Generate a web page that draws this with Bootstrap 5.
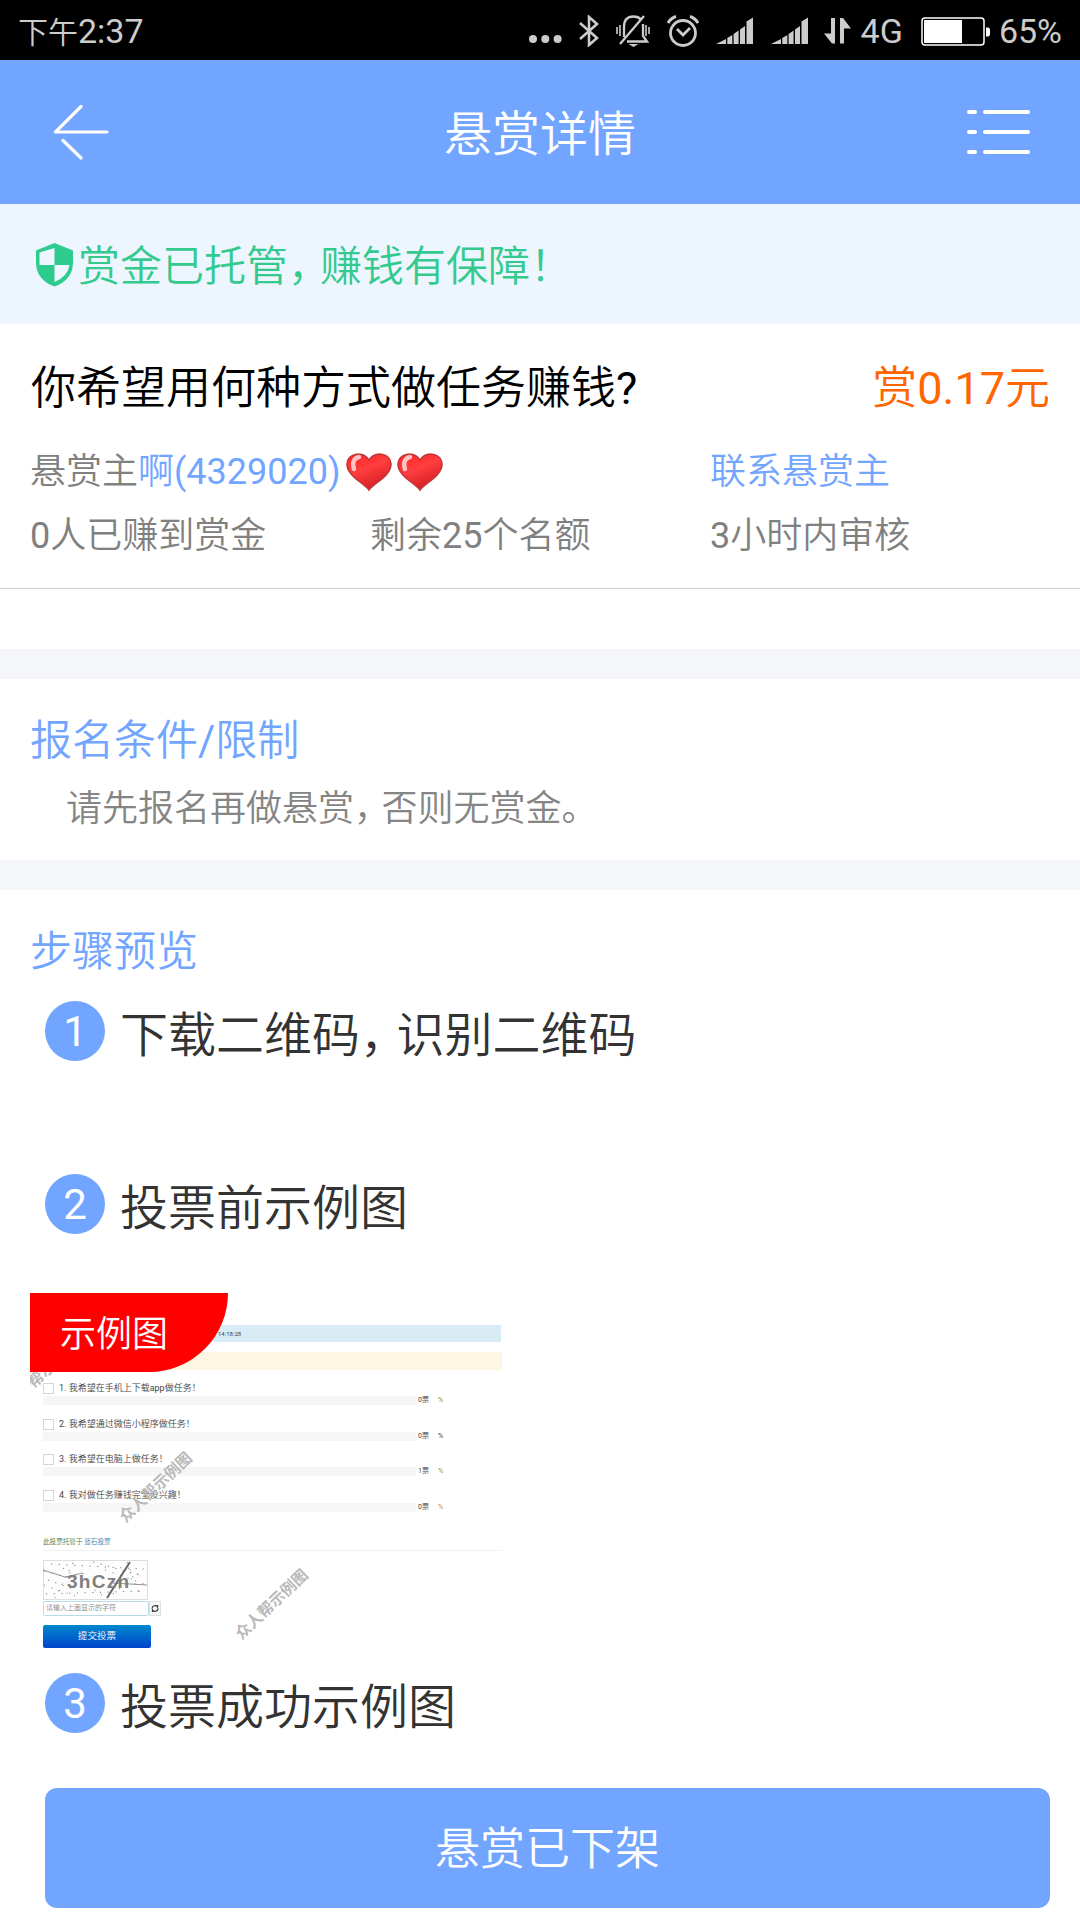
<!DOCTYPE html>
<html lang="zh-CN">
<head>
<meta charset="utf-8">
<meta name="viewport" content="width=device-width, initial-scale=1">
<title>悬赏详情</title>
<link rel="stylesheet" href="https://cdn.jsdelivr.net/npm/bootstrap@5.3.0/dist/css/bootstrap.min.css">
<style>
:root{--brand:#72a5ff}
body{font-family:Roboto,"Noto Sans CJK SC DemiLight","Noto Sans CJK SC",sans-serif;font-weight:400;color:#333;background:#fff;line-height:1}
.page{width:1080px;height:1920px}
svg{display:block;flex:none}
.status{height:60px;background:#000;color:#ccc;font-size:34px;padding:1px 18px 0}
.status .cn{font-size:30px}
.icons{gap:17px}
.i-data{margin-left:-2px}.i-net{margin-left:-7px}.i-bat{margin-left:1px}.i-pct{margin-left:-8px}
.topbar{height:144px;background:var(--brand);padding:0 48px 0 52px}
.topbar h1{font-size:48px;font-weight:400;padding:5px 0 0 4px}
.notice{height:120px;background:#edf5ff;color:#34ca8e;font-size:42px;padding:0 35px}
.notice>span{padding-top:5px}
.notice svg{margin-top:2px}
.cm{letter-spacing:-.24em}
.pad{padding-left:30px;padding-right:30px}
.summary{height:265px;border-bottom:1px solid #d2d2d2;padding-top:35px}
.ttl{font-size:45px;line-height:60px;padding-left:1px}
.price{color:#ff6600}
.meta{font-size:36px;line-height:64px;color:#808080;margin-top:21px}
.meta .col-4{padding:0}
.hearts{margin-left:5px}
.blue{color:var(--brand)}
.blank{height:60px}
.band{height:30px;background:#f4f6f9}
.rule-box{height:181px;padding-top:32px}
.steps{padding-top:32px}
.sec{font-size:42px;line-height:60px}
.rule{font-size:36px;line-height:60px;color:#858585;padding-left:36px;margin-top:8px}
.step{height:60px;padding-left:15px;gap:15px;font-size:48px}
.st{padding-top:10px}
.num{width:60px;height:60px;background:var(--brand);color:#fff;font-size:42px;padding-top:2px}
.s1{margin-top:19px}.s2{margin-top:113px}
.shot{width:472px;height:367px;margin-top:59px;font-size:9px;color:#444;padding:32px 0 0 13px}
.tag{left:0;top:0;width:198px;height:79px;background:#f00;color:#fff;font-size:36px;border-bottom-right-radius:79px;padding:4px 0 0 30px;z-index:2}
.infobar{height:17px;background:#d9ebf5;font-size:6px;margin-right:1px;padding-left:175px}
.warnbar{height:18px;background:#fdf6e2;margin-top:10px}
.opts{margin-top:13px}
.opt{height:35.7px}
.opt-l{height:13px;gap:5px;line-height:11px}
.box{width:11px;height:11px;border:1px solid #d5d5d5}
.track{width:373px;height:9px;background:#f6f6f6}
.votes{font-size:7px;gap:9px;padding-left:2px;height:9px}
.host{font-size:6.6px;color:#3c763d;height:12px;margin-top:13px;border-bottom:1px solid #f1f1f1}
.host a{color:#2a7fa8;text-decoration:none}
.captcha{margin-top:9px}
.entry{margin-top:1px}
.fld{width:106px;height:15px;border:1px solid #b5dcec;border-radius:2px;color:#888;font-size:7px;padding-left:2px}
.rf{width:12px;height:15px;border:1px solid #e0e0e0;background:#f7f7f7}
.sub{width:108px;height:23px;margin-top:9px;border-radius:2px;background:linear-gradient(#08c,#04c);color:#fff;font-size:9.6px}
.wm{font-family:"Noto Sans CJK SC",sans-serif;font-size:15.5px;color:#b9b9b9;white-space:nowrap;line-height:16px;transform:rotate(-43.5deg);font-weight:700}
.w1{left:78px;top:185px}.w2{left:194px;top:302px}.w3{left:-5px;top:72px}
.s3{margin-top:13px}
.cta{margin:55px 0 0 15px;width:1005px;height:120px;background:var(--brand);color:#fff;border-radius:12px;font-size:45px;border:0;padding-top:4px}
</style>
</head>
<body>
<div class="page overflow-hidden d-flex flex-column">
  <div class="status d-flex justify-content-between align-items-center flex-shrink-0">
    <div><span class="cn">下午</span>2:37</div>
    <div class="icons d-flex align-items-center">
      <svg width="33" height="32" fill="#ccc"><circle cx="4" cy="24" r="4"/><circle cx="16.300" cy="24" r="4"/><circle cx="28.600" cy="24" r="4"/></svg>
      <svg width="20" height="32" fill="none" stroke="#ccc" stroke-width="2.600"><path d="M1 8 18 23 10 30V2l8 7L1 24"/></svg>
      <svg width="34" height="32" fill="none" stroke="#ccc" stroke-width="2.300"><path d="M8 22V12Q8 1.500 17.500 1.500q5 0 7.500 3M27 9v12l4 5.500H11M4 29 28 1"/><path d="M12.500 29h10l-5 3z" fill="#ccc" stroke="none"/><path d="M1 12v7M4 10v11M30 10v11M33 12v7" stroke-width="1.600"/></svg>
      <svg width="32" height="32" fill="none" stroke="#ccc" stroke-width="2.800"><circle cx="16" cy="18" r="12.500"/><path d="m10 14 6 6 7-7"/><path d="M1 8Q4 3 9 1.500M31 8Q28 3 23 1.500" stroke-width="3"/></svg>
      <svg width="38" height="32" fill="#ccc"><path id="sig" d="M0 29 10 24v5zM11.300 23l5-3v9h-5zM17.600 19l5-3.500V29h-5zM24 14.500l5-3.500v18h-5zM30.500 6.500 37 2.500V29h-6.500z"/></svg>
      <svg width="38" height="32" fill="#ccc"><use href="#sig"/></svg>
      <svg class="i-data" width="27" height="32" fill="#ccc"><path d="M7 3h4v25.500H8L0 18.500h7zM16 28.500h4v-15h7L19 3h-3z"/></svg>
      <span class="i-net">4G</span>
      <svg class="i-bat" width="69" height="32"><rect x="1" y="3" width="62" height="27" rx="3" fill="none" stroke="#fff" stroke-width="1.500"/><path d="M3 5h38v23H3zM65 12.500h2.500l1.500 1.500v6l-1.500 1.500H65z" fill="#fff"/></svg>
      <span class="i-pct">65%</span>
    </div>
  </div>
  <header class="topbar d-flex align-items-center justify-content-between text-white flex-shrink-0">
    <svg width="58" height="56" fill="none" stroke="#fff" stroke-width="3.200" stroke-linecap="round" stroke-linejoin="round"><path d="M29 2.500 3.500 28H55M11 36.500 29 54"/></svg>
    <h1 class="m-0">悬赏详情</h1>
    <svg width="66" height="48" fill="none" stroke="#fff" stroke-width="4" stroke-linecap="round"><path d="M3 4h6M19 4h43M3 24h6M19 24h43M3 44h6M19 44h43"/></svg>
  </header>
  <div class="notice d-flex align-items-center flex-shrink-0">
    <svg width="43" height="44" viewBox="0 0 43 44"><path d="M19.500 0 38 7.500V20Q37.500 37 19.500 43.500 1.500 37 1 20V7.500z" fill="#2ecc8c"/><path d="M19.500 5v17H4.500V9.500zM19.500 22h15Q32.500 34 19.500 39z" fill="#edf5ff"/></svg>
    <span>赏金已托管<span class="cm">，</span>赚钱有保障！</span>
  </div>
  <section class="summary pad flex-shrink-0">
    <div class="ttl d-flex justify-content-between"><span class="text-black">你希望用何种方式做任务赚钱?</span><span class="price">赏0.17元</span></div>
    <div class="meta">
      <div class="row g-0"><div class="col-8 d-flex align-items-center"><span>悬赏主<span class="blue">啊(4329020)</span></span>
        <svg class="hearts" width="102" height="40" viewBox="0 0 102 40"><defs><linearGradient id="hg" x2=".5" y2="1"><stop stop-color="#f22"/><stop offset=".5" stop-color="#ff3e3e"/><stop offset="1" stop-color="#d21f24"/></linearGradient><g id="ht"><path d="M23 38C18 31 1 24 1 12 1 2 16-2 23 8 30-2 45 2 45 12 45 24 28 31 23 38z" fill="url(#hg)" stroke="#c8343a" stroke-width="1.600"/><path d="M8 17Q5 7 13 5" fill="none" stroke="#ffc5c5" stroke-width="4.500" stroke-linecap="round"/></g></defs><use href="#ht"/><use href="#ht" x="51"/></svg></div>
        <div class="col-4 blue">联系悬赏主</div></div>
      <div class="row g-0"><div class="col-4">0人已赚到赏金</div><div class="col-4">剩余25个名额</div><div class="col-4">3小时内审核</div></div>
    </div>
  </section>
  <div class="blank flex-shrink-0"></div>
  <div class="band flex-shrink-0"></div>
  <section class="rule-box pad flex-shrink-0">
    <div class="sec blue">报名条件/限制</div>
    <div class="rule">请先报名再做悬赏<span class="cm">，</span>否则无赏金。</div>
  </section>
  <div class="band flex-shrink-0"></div>
  <section class="steps pad flex-shrink-0">
    <div class="sec blue">步骤预览</div>
    <div class="step s1 d-flex align-items-center"><span class="num rounded-circle d-flex align-items-center justify-content-center">1</span><span class="st">下载二维码<span class="cm">，</span>识别二维码</span></div>
    <div class="step s2 d-flex align-items-center"><span class="num rounded-circle d-flex align-items-center justify-content-center">2</span><span class="st">投票前示例图</span></div>
    <div class="shot position-relative overflow-hidden">
      <div class="tag position-absolute d-flex align-items-center"><span>示例图</span></div>
      <div class="infobar d-flex align-items-center">14:18:28</div>
      <div class="warnbar"></div>
      <div class="opts">
        <div class="opt"><div class="opt-l d-flex"><i class="box"></i>1. 我希望在手机上下载app做任务！</div><div class="d-flex"><div class="track"></div><div class="votes d-flex align-items-center"><span>0票</span><span style="color:#88964a">%</span></div></div></div>
        <div class="opt"><div class="opt-l d-flex"><i class="box"></i>2. 我希望通过微信小程序做任务！</div><div class="d-flex"><div class="track"></div><div class="votes d-flex align-items-center"><span>0票</span><span>%</span></div></div></div>
        <div class="opt"><div class="opt-l d-flex"><i class="box"></i>3. 我希望在电脑上做任务！</div><div class="d-flex"><div class="track"></div><div class="votes d-flex align-items-center"><span>1票</span><span style="color:#88964a">%</span></div></div></div>
        <div class="opt"><div class="opt-l d-flex"><i class="box"></i>4. 我对做任务赚钱完全没兴趣！</div><div class="d-flex"><div class="track"></div><div class="votes d-flex align-items-center"><span>0票</span><span style="color:#e08a4a">%</span></div></div></div>
      </div>
      <div class="host">此投票托管于 <a href="#">蓝石投票</a></div>
      <svg class="captcha" width="106" height="40"><rect x=".5" y=".5" width="104" height="39" fill="#fdfdfd" stroke="#ddd"/>
        <g fill="none" stroke="#777"><path d="M1 11 24 17 45 13M1 25 38 38M62 10 104 25" stroke-dasharray="1 7"/><path d="M8 4 100 9M3 34 100 31M20 8 60 36M70 34 104 6M30 3 12 38M84 2 98 38M50 2 100 16M5 20 30 29" stroke-dasharray="1.200 6.500"/><path d="M0 10 22 17 40 13M70 23 104 25" stroke-width=".8"/><path d="M87 2 64 38" stroke="#666" stroke-width="2"/></g>
        <text x="24" y="28" font-family="Liberation Sans" font-size="19" font-weight="700" fill="#808080" textLength="62">3hCzn</text></svg>
      <div class="entry d-flex"><div class="fld d-flex align-items-center">请输入上面显示的字符</div><div class="rf"><svg width="10" height="13" fill="none" stroke="#333" stroke-width="1.200"><path d="M2 6.500a3 3 0 0 1 5.500-1.500V3M8 6.500A3 3 0 0 1 2.500 8v2"/></svg></div></div>
      <div class="sub d-flex align-items-center justify-content-center">提交投票</div>
      <div class="wm w1 position-absolute">众人帮示例图</div>
      <div class="wm w2 position-absolute">众人帮示例图</div>
      <div class="wm w3 position-absolute">帮示</div>
    </div>
    <div class="step s3 d-flex align-items-center"><span class="num rounded-circle d-flex align-items-center justify-content-center">3</span><span class="st">投票成功示例图</span></div>
    <button class="cta d-flex align-items-center justify-content-center" type="button">悬赏已下架</button>
  </section>
</div>
<script src="https://cdn.jsdelivr.net/npm/bootstrap@5.3.0/dist/js/bootstrap.bundle.min.js"></script>
</body>
</html>
